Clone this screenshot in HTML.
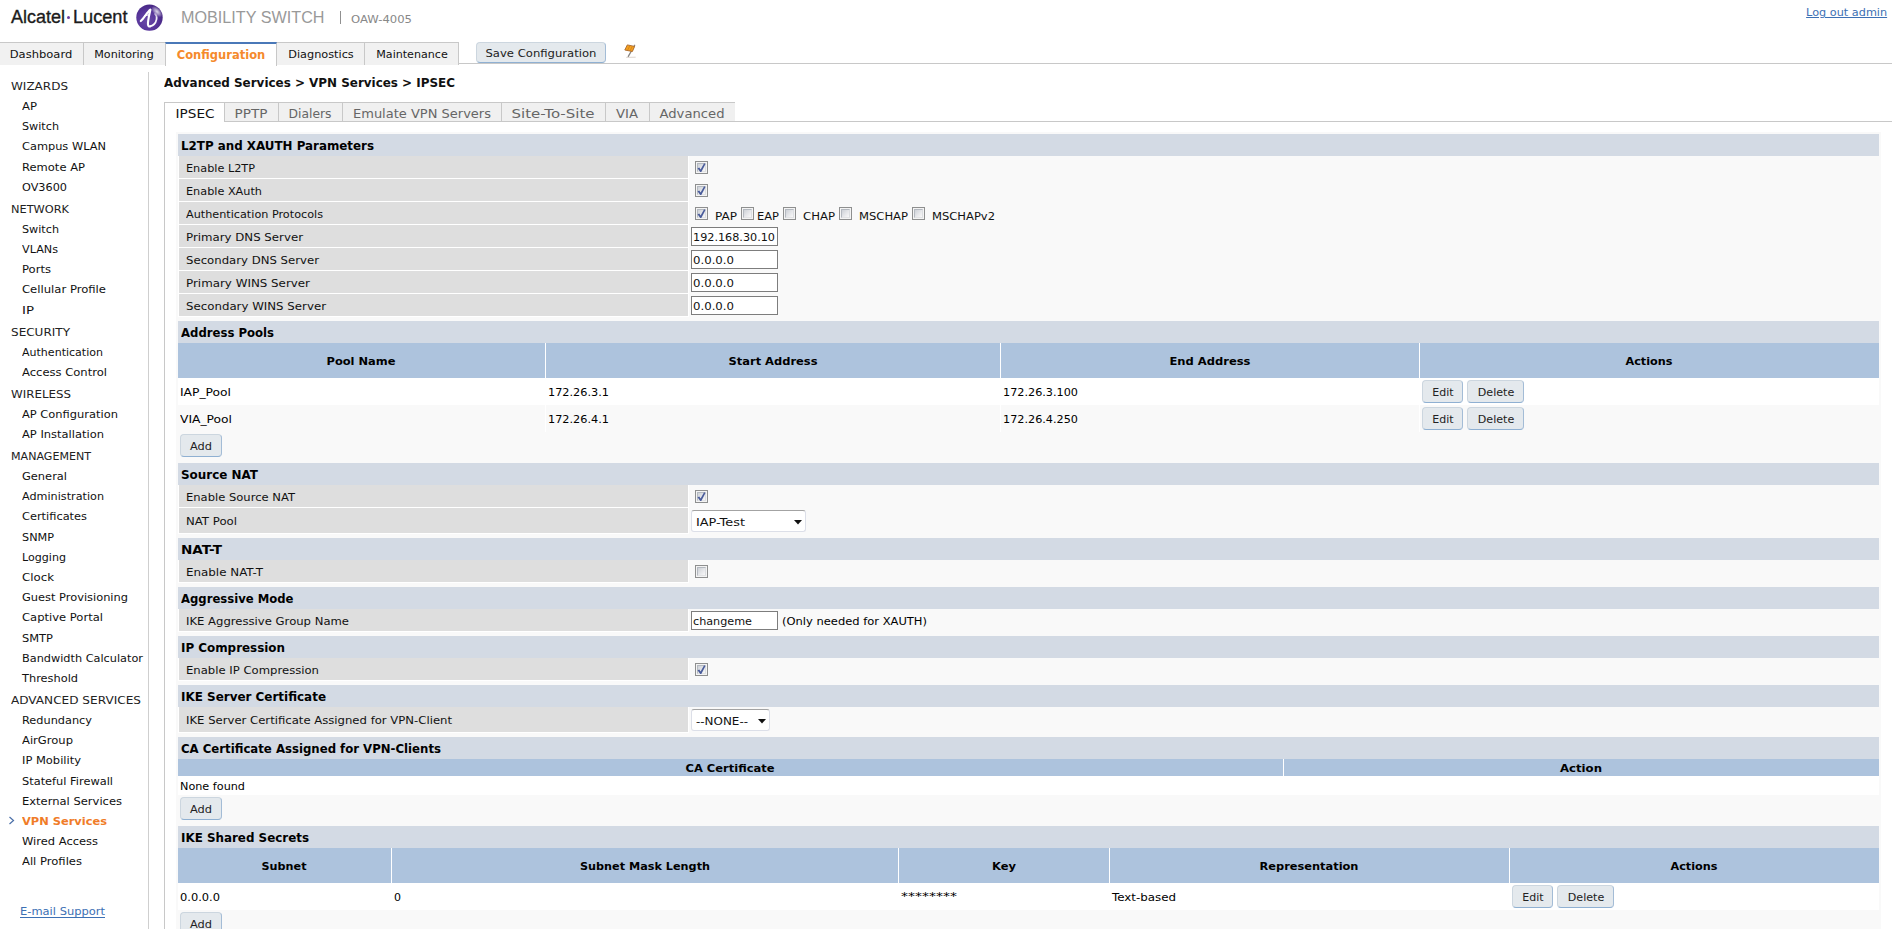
<!DOCTYPE html>
<html lang="en"><head><meta charset="utf-8"><title>Mobility Switch - IPSEC</title>
<style>
html,body{margin:0;padding:0;background:#fff;}
body{width:1892px;height:929px;position:relative;overflow:hidden;font-family:"DejaVu Sans", "Liberation Sans", sans-serif;font-size:11px;color:#000;}
body>div,body>span,body>a,body>svg{position:absolute;box-sizing:border-box;}
.t{white-space:nowrap;}

.btn{background:#e4e9ed;border:1px solid #ccd6df;border-bottom-color:#8fb0d2;border-right-color:#a3bcd6;border-radius:4px;}
.inp{background:#fff;border:1px solid #7d7d7d;}
.sel{background:#fff;border:1px solid #dcdfe8;border-top-color:#a3a3a3;border-radius:3px;}
.cb{background:#f3f3f3;border:1px solid #8e8f8f;}
</style></head>
<body>
<span id="t1" class="t" style="transform:scaleX(0.9994);top:5.0px;font-size:18px;line-height:24px;color:#1c1c1c;font-family:'Liberation Sans', sans-serif;left:10.5px;transform-origin:0 50%;-webkit-text-stroke:0.35px #1c1c1c;">Alcatel</span>
<div style="left:66.8px;top:15.6px;width:3.4px;height:3.4px;background:#6a3fa0;border-radius:50%;"></div>
<span id="t2" class="t" style="transform:scaleX(1.0084);top:5.0px;font-size:18px;line-height:24px;color:#1c1c1c;font-family:'Liberation Sans', sans-serif;left:72.5px;transform-origin:0 50%;-webkit-text-stroke:0.35px #1c1c1c;">Lucent</span>
<svg style="left:134px;top:2px" width="32" height="32" viewBox="0 0 32 32">
<defs><radialGradient id="lg" cx="40%" cy="62%" r="62%"><stop offset="0" stop-color="#6a4aa7"/><stop offset="0.6" stop-color="#58369b"/><stop offset="1" stop-color="#472784"/></radialGradient>
<radialGradient id="lh" cx="50%" cy="50%" r="50%"><stop offset="0" stop-color="#fff" stop-opacity="0.8"/><stop offset="0.5" stop-color="#fff" stop-opacity="0.45"/><stop offset="1" stop-color="#fff" stop-opacity="0"/></radialGradient>
<linearGradient id="lf" gradientUnits="userSpaceOnUse" x1="16" y1="24" x2="22" y2="11"><stop offset="0" stop-color="#fff" stop-opacity="1"/><stop offset="0.75" stop-color="#fff" stop-opacity="0.9"/><stop offset="1" stop-color="#fff" stop-opacity="0.3"/></linearGradient></defs>
<circle cx="15.5" cy="15.6" r="13.2" fill="url(#lg)"/>
<ellipse cx="23" cy="9.6" rx="7" ry="3.8" transform="rotate(45 23 9.6)" fill="url(#lh)"/>
<path d="M6.8 19.1 C10.5 15.6 13.2 10 16.4 7.7 C15.8 11 13.5 19 14 22.7 C14.2 24.3 15.2 24.7 16.4 24.3" fill="none" stroke="#fff" stroke-width="2.1" stroke-linecap="round" stroke-linejoin="round"/>
<path d="M16.4 24.3 C19.2 23.6 21.7 21 22.5 17.5 C23 15.3 22.7 13.2 21 11.9" fill="none" stroke="url(#lf)" stroke-width="1.7" stroke-linecap="round"/>
<path d="M10.8 13.5 L14.6 12.8" fill="none" stroke="#fff" stroke-width="1.2" stroke-linecap="round"/>
</svg>
<span id="t3" class="t" style="transform:scaleX(1.0110);top:7.400000000000002px;font-size:16px;line-height:22px;color:#999;font-family:'Liberation Sans', sans-serif;left:181px;transform-origin:0 50%;">MOBILITY SWITCH</span>
<div style="left:340px;top:11px;width:1px;height:13px;background:#909090;"></div>
<span id="t4" class="t" style="transform:scaleX(1.0554);top:11.8px;font-size:11px;line-height:15px;color:#888;left:351px;transform-origin:0 50%;">OAW-4005</span>
<span id="t5" class="t" style="transform:scaleX(1.0237);top:5.300000000000001px;font-size:11px;line-height:15px;color:#3c70b4;right:5px;transform-origin:100% 50%;text-decoration:underline;">Log out admin</span>
<div style="left:459px;top:63px;width:1433px;height:1px;background:#c8c8c8;"></div>
<div style="left:-1px;top:42px;width:85px;height:23px;background:#f1f1f1;border-left:1px solid #c8c8c8;border-right:1px solid #c8c8c8;border-top:1px solid #c8c8c8;"></div>
<span id="t6" class="t" style="transform:scaleX(1.0471);top:46.699999999999996px;font-size:11px;line-height:15px;color:#111;left:40.9px;margin-left:-300px;width:600px;text-align:center;transform-origin:50% 50%;">Dashboard</span>
<div style="left:83px;top:42px;width:83px;height:23px;background:#f1f1f1;border-left:1px solid #c8c8c8;border-right:1px solid #c8c8c8;border-top:1px solid #c8c8c8;"></div>
<span id="t7" class="t" style="transform:scaleX(1.0114);top:46.699999999999996px;font-size:11px;line-height:15px;color:#111;left:124.1px;margin-left:-300px;width:600px;text-align:center;transform-origin:50% 50%;">Monitoring</span>
<div style="left:276px;top:42px;width:89px;height:23px;background:#f1f1f1;border-left:1px solid #c8c8c8;border-right:1px solid #c8c8c8;border-top:1px solid #c8c8c8;"></div>
<span id="t8" class="t" style="transform:scaleX(1.0259);top:46.699999999999996px;font-size:11px;line-height:15px;color:#111;left:320.5px;margin-left:-300px;width:600px;text-align:center;transform-origin:50% 50%;">Diagnostics</span>
<div style="left:364px;top:42px;width:95px;height:23px;background:#f1f1f1;border-left:1px solid #c8c8c8;border-right:1px solid #c8c8c8;border-top:1px solid #c8c8c8;"></div>
<span id="t9" class="t" style="transform:scaleX(1.0093);top:46.699999999999996px;font-size:11px;line-height:15px;color:#111;left:411.5px;margin-left:-300px;width:600px;text-align:center;transform-origin:50% 50%;">Maintenance</span>
<div style="left:165px;top:42px;width:112px;height:24px;background:#fff;border-left:1px solid #c8c8c8;border-right:1px solid #c8c8c8;border-top:2px solid #4a78b8;"></div>
<span id="t10" class="t" style="transform:scaleX(0.9590);top:47.0px;font-size:12px;line-height:16px;color:#f58a2c;font-weight:bold;left:220.5px;margin-left:-300px;width:600px;text-align:center;transform-origin:50% 50%;">Configuration</span>
<div class="btn" style="left:476px;top:42px;width:130px;height:21px;"></div>
<span id="t11" class="t" style="transform:scaleX(1.0560);top:45.599999999999994px;font-size:11px;line-height:15px;color:#222;left:541.0px;margin-left:-300px;width:600px;text-align:center;transform-origin:50% 50%;">Save Configuration</span>
<svg style="left:622px;top:43px" width="16" height="16" viewBox="0 0 16 16">
<path d="M4.2 14.4 L13.7 14.2" stroke="#d8cfc8" stroke-width="0.9" fill="none"/>
<path d="M12.7 2.2 L6.3 13.4" stroke="#8a8682" stroke-width="1.3" fill="none" stroke-linecap="round"/>
<path d="M5.3 1.9 L12.6 3.4 L10.4 8.5 L2.8 7.0 Z" fill="#f5a11f" stroke="#a8662a" stroke-width="0.9" stroke-linejoin="round"/>
<path d="M7.8 2.8 L5.6 7.2 M10.2 3.6 L8 7.8" stroke="#c97a1a" stroke-width="0.7" fill="none"/>
</svg>
<div style="left:148px;top:72px;width:1px;height:857px;background:#cfcfcf;"></div>
<span id="t12" class="t" style="transform:scaleX(1.0903);top:78.8px;font-size:11px;line-height:15px;color:#222;left:11px;transform-origin:0 50%;">WIZARDS</span>
<span id="t13" class="t" style="transform:scaleX(1.0584);top:98.8px;font-size:11px;line-height:15px;color:#111;left:22px;transform-origin:0 50%;">AP</span>
<span id="t14" class="t" style="transform:scaleX(1.0172);top:118.8px;font-size:11px;line-height:15px;color:#111;left:22px;transform-origin:0 50%;">Switch</span>
<span id="t15" class="t" style="transform:scaleX(1.0327);top:138.8px;font-size:11px;line-height:15px;color:#111;left:22px;transform-origin:0 50%;">Campus WLAN</span>
<span id="t16" class="t" style="transform:scaleX(1.0481);top:159.8px;font-size:11px;line-height:15px;color:#111;left:22px;transform-origin:0 50%;">Remote AP</span>
<span id="t17" class="t" style="transform:scaleX(1.0231);top:179.8px;font-size:11px;line-height:15px;color:#111;left:22px;transform-origin:0 50%;">OV3600</span>
<span id="t18" class="t" style="transform:scaleX(1.0303);top:201.8px;font-size:11px;line-height:15px;color:#222;left:11px;transform-origin:0 50%;">NETWORK</span>
<span id="t19" class="t" style="transform:scaleX(1.0172);top:221.8px;font-size:11px;line-height:15px;color:#111;left:22px;transform-origin:0 50%;">Switch</span>
<span id="t20" class="t" style="transform:scaleX(1.0172);top:241.8px;font-size:11px;line-height:15px;color:#111;left:22px;transform-origin:0 50%;">VLANs</span>
<span id="t21" class="t" style="transform:scaleX(1.0528);top:261.8px;font-size:11px;line-height:15px;color:#111;left:22px;transform-origin:0 50%;">Ports</span>
<span id="t22" class="t" style="transform:scaleX(1.0558);top:281.8px;font-size:11px;line-height:15px;color:#111;left:22px;transform-origin:0 50%;">Cellular Profile</span>
<span id="t23" class="t" style="transform:scaleX(1.2133);top:302.8px;font-size:11px;line-height:15px;color:#111;left:22px;transform-origin:0 50%;">IP</span>
<span id="t24" class="t" style="transform:scaleX(1.0926);top:324.8px;font-size:11px;line-height:15px;color:#222;left:11px;transform-origin:0 50%;">SECURITY</span>
<span id="t25" class="t" style="transform:scaleX(1.0031);top:344.8px;font-size:11px;line-height:15px;color:#111;left:22px;transform-origin:0 50%;">Authentication</span>
<span id="t26" class="t" style="transform:scaleX(1.0504);top:364.8px;font-size:11px;line-height:15px;color:#111;left:22px;transform-origin:0 50%;">Access Control</span>
<span id="t27" class="t" style="transform:scaleX(1.0759);top:386.8px;font-size:11px;line-height:15px;color:#222;left:11px;transform-origin:0 50%;">WIRELESS</span>
<span id="t28" class="t" style="transform:scaleX(1.0405);top:406.8px;font-size:11px;line-height:15px;color:#111;left:22px;transform-origin:0 50%;">AP Configuration</span>
<span id="t29" class="t" style="transform:scaleX(1.0433);top:426.8px;font-size:11px;line-height:15px;color:#111;left:22px;transform-origin:0 50%;">AP Installation</span>
<span id="t30" class="t" style="transform:scaleX(1.0069);top:448.8px;font-size:11px;line-height:15px;color:#222;left:11px;transform-origin:0 50%;">MANAGEMENT</span>
<span id="t31" class="t" style="transform:scaleX(1.0378);top:468.8px;font-size:11px;line-height:15px;color:#111;left:22px;transform-origin:0 50%;">General</span>
<span id="t32" class="t" style="transform:scaleX(1.0186);top:488.8px;font-size:11px;line-height:15px;color:#111;left:22px;transform-origin:0 50%;">Administration</span>
<span id="t33" class="t" style="transform:scaleX(1.0338);top:508.79999999999995px;font-size:11px;line-height:15px;color:#111;left:22px;transform-origin:0 50%;">Certificates</span>
<span id="t34" class="t" style="transform:scaleX(1.0209);top:529.8px;font-size:11px;line-height:15px;color:#111;left:22px;transform-origin:0 50%;">SNMP</span>
<span id="t35" class="t" style="transform:scaleX(1.0082);top:549.8px;font-size:11px;line-height:15px;color:#111;left:22px;transform-origin:0 50%;">Logging</span>
<span id="t36" class="t" style="transform:scaleX(1.0706);top:569.8px;font-size:11px;line-height:15px;color:#111;left:22px;transform-origin:0 50%;">Clock</span>
<span id="t37" class="t" style="transform:scaleX(1.0359);top:589.8px;font-size:11px;line-height:15px;color:#111;left:22px;transform-origin:0 50%;">Guest Provisioning</span>
<span id="t38" class="t" style="transform:scaleX(1.0498);top:609.8px;font-size:11px;line-height:15px;color:#111;left:22px;transform-origin:0 50%;">Captive Portal</span>
<span id="t39" class="t" style="transform:scaleX(1.0393);top:630.8px;font-size:11px;line-height:15px;color:#111;left:22px;transform-origin:0 50%;">SMTP</span>
<span id="t40" class="t" style="transform:scaleX(1.0261);top:650.8px;font-size:11px;line-height:15px;color:#111;left:22px;transform-origin:0 50%;">Bandwidth Calculator</span>
<span id="t41" class="t" style="transform:scaleX(1.0329);top:670.8px;font-size:11px;line-height:15px;color:#111;left:22px;transform-origin:0 50%;">Threshold</span>
<span id="t42" class="t" style="transform:scaleX(1.0985);top:692.8px;font-size:11px;line-height:15px;color:#222;left:11px;transform-origin:0 50%;">ADVANCED SERVICES</span>
<span id="t43" class="t" style="transform:scaleX(1.0278);top:712.8px;font-size:11px;line-height:15px;color:#111;left:22px;transform-origin:0 50%;">Redundancy</span>
<span id="t44" class="t" style="transform:scaleX(1.0495);top:732.8px;font-size:11px;line-height:15px;color:#111;left:22px;transform-origin:0 50%;">AirGroup</span>
<span id="t45" class="t" style="transform:scaleX(1.0428);top:752.8px;font-size:11px;line-height:15px;color:#111;left:22px;transform-origin:0 50%;">IP Mobility</span>
<span id="t46" class="t" style="transform:scaleX(1.0341);top:773.8px;font-size:11px;line-height:15px;color:#111;left:22px;transform-origin:0 50%;">Stateful Firewall</span>
<span id="t47" class="t" style="transform:scaleX(1.0468);top:793.8px;font-size:11px;line-height:15px;color:#111;left:22px;transform-origin:0 50%;">External Services</span>
<span id="t48" class="t" style="transform:scaleX(1.0380);top:813.8px;font-size:11px;line-height:15px;color:#f07c28;font-weight:bold;left:22px;transform-origin:0 50%;">VPN Services</span>
<svg style="left:8px;top:816px" width="8" height="9" viewBox="0 0 8 9"><path d="M1.5 1 L5.5 4.5 L1.5 8" fill="none" stroke="#4a6fa8" stroke-width="1.2"/></svg>
<span id="t49" class="t" style="transform:scaleX(1.0429);top:833.8px;font-size:11px;line-height:15px;color:#111;left:22px;transform-origin:0 50%;">Wired Access</span>
<span id="t50" class="t" style="transform:scaleX(1.0512);top:853.8px;font-size:11px;line-height:15px;color:#111;left:22px;transform-origin:0 50%;">All Profiles</span>
<span id="t51" class="t" style="transform:scaleX(1.0433);top:903.8px;font-size:11px;line-height:15px;color:#3c70b4;left:20px;transform-origin:0 50%;text-decoration:underline;text-underline-offset:2px;">E-mail Support</span>
<span id="t52" class="t" style="transform:scaleX(0.9950);top:74.8px;font-size:12px;line-height:16px;color:#111;font-weight:bold;left:164px;transform-origin:0 50%;">Advanced Services &gt; VPN Services &gt; IPSEC</span>
<div style="left:164px;top:121px;width:1728px;height:1px;background:#c8c8c8;"></div>
<div style="left:164px;top:102px;width:1px;height:827px;background:#c8c8c8;"></div>
<div style="left:224px;top:102px;width:55px;height:20px;background:#f0f0f0;border:1px solid #c8c8c8;"></div>
<span id="t53" class="t" style="transform:scaleX(1.0487);top:104.5px;font-size:13px;line-height:17px;color:#666;left:251.0px;margin-left:-300px;width:600px;text-align:center;transform-origin:50% 50%;">PPTP</span>
<div style="left:278px;top:102px;width:65px;height:20px;background:#f0f0f0;border:1px solid #c8c8c8;"></div>
<span id="t54" class="t" style="transform:scaleX(0.9486);top:104.5px;font-size:13px;line-height:17px;color:#666;left:310.0px;margin-left:-300px;width:600px;text-align:center;transform-origin:50% 50%;">Dialers</span>
<div style="left:342px;top:102px;width:160px;height:20px;background:#f0f0f0;border:1px solid #c8c8c8;"></div>
<span id="t55" class="t" style="transform:scaleX(1.0006);top:104.5px;font-size:13px;line-height:17px;color:#666;left:421.5px;margin-left:-300px;width:600px;text-align:center;transform-origin:50% 50%;">Emulate VPN Servers</span>
<div style="left:501px;top:102px;width:105px;height:20px;background:#f0f0f0;border:1px solid #c8c8c8;"></div>
<span id="t56" class="t" style="transform:scaleX(1.1520);top:104.5px;font-size:13px;line-height:17px;color:#666;left:553.0px;margin-left:-300px;width:600px;text-align:center;transform-origin:50% 50%;">Site-To-Site</span>
<div style="left:605px;top:102px;width:45px;height:20px;background:#f0f0f0;border:1px solid #c8c8c8;"></div>
<span id="t57" class="t" style="transform:scaleX(1.0173);top:104.5px;font-size:13px;line-height:17px;color:#666;left:627.0px;margin-left:-300px;width:600px;text-align:center;transform-origin:50% 50%;">VIA</span>
<div style="left:649px;top:102px;width:86px;height:20px;background:#f0f0f0;border:1px solid #c8c8c8;border-right:none;"></div>
<span id="t58" class="t" style="transform:scaleX(1.0122);top:104.5px;font-size:13px;line-height:17px;color:#666;left:691.5px;margin-left:-300px;width:600px;text-align:center;transform-origin:50% 50%;">Advanced</span>
<div style="left:164px;top:102px;width:61px;height:20px;background:#fff;border:1px solid #c8c8c8;border-bottom:none;"></div>
<div style="left:165px;top:121px;width:59px;height:1px;background:#fff;"></div>
<span id="t59" class="t" style="transform:scaleX(1.0479);top:104.5px;font-size:13px;line-height:17px;color:#111;left:194.5px;margin-left:-300px;width:600px;text-align:center;transform-origin:50% 50%;">IPSEC</span>
<div style="left:176px;top:132px;width:1705px;height:797px;background:#f9f9f9;"></div>
<div style="left:178px;top:134px;width:1701px;height:22px;background:#d3dae4;"></div>
<span id="t60" class="t" style="transform:scaleX(0.9895);top:137.8px;font-size:12px;line-height:16px;color:#000;font-weight:bold;left:181px;transform-origin:0 50%;">L2TP and XAUTH Parameters</span>
<div style="left:178px;top:156px;width:511px;height:23px;background:#fff;"></div>
<div style="left:179px;top:156px;width:509px;height:22px;background:#dedede;"></div>
<span id="t61" class="t" style="transform:scaleX(1.0229);top:161.0px;font-size:11px;line-height:15px;color:#111;left:186px;transform-origin:0 50%;">Enable L2TP</span>
<div style="left:695px;top:161px;width:13px;height:13px;background:#f4f4f4;border:1px solid #8e8f8f;"></div>
<div style="left:697px;top:163px;width:9px;height:9px;background:linear-gradient(135deg,#cdd1d7 0%,#e6e7ea 55%,#f8f8f8 100%);border:1px solid #b4b9c0;border-right-color:#dcdee1;border-bottom-color:#e2e3e5;"></div>
<svg style="left:695px;top:161px" width="13" height="13" viewBox="0 0 13 13"><path d="M2.5 7.3 L4.3 6.5 L5.6 8.5 L9.1 2.3 L10.5 2.9 L6.3 10.9 L5.2 10.9 Z" fill="#4a5c9b"/></svg>
<div style="left:178px;top:179px;width:511px;height:23px;background:#fff;"></div>
<div style="left:179px;top:179px;width:509px;height:22px;background:#dedede;"></div>
<span id="t62" class="t" style="transform:scaleX(1.0229);top:184.0px;font-size:11px;line-height:15px;color:#111;left:186px;transform-origin:0 50%;">Enable XAuth</span>
<div style="left:695px;top:184px;width:13px;height:13px;background:#f4f4f4;border:1px solid #8e8f8f;"></div>
<div style="left:697px;top:186px;width:9px;height:9px;background:linear-gradient(135deg,#cdd1d7 0%,#e6e7ea 55%,#f8f8f8 100%);border:1px solid #b4b9c0;border-right-color:#dcdee1;border-bottom-color:#e2e3e5;"></div>
<svg style="left:695px;top:184px" width="13" height="13" viewBox="0 0 13 13"><path d="M2.5 7.3 L4.3 6.5 L5.6 8.5 L9.1 2.3 L10.5 2.9 L6.3 10.9 L5.2 10.9 Z" fill="#4a5c9b"/></svg>
<div style="left:178px;top:202px;width:511px;height:23px;background:#fff;"></div>
<div style="left:179px;top:202px;width:509px;height:22px;background:#dedede;"></div>
<span id="t63" class="t" style="transform:scaleX(1.0200);top:207.0px;font-size:11px;line-height:15px;color:#111;left:186px;transform-origin:0 50%;">Authentication Protocols</span>
<div style="left:695px;top:207px;width:13px;height:13px;background:#f4f4f4;border:1px solid #8e8f8f;"></div>
<div style="left:697px;top:209px;width:9px;height:9px;background:linear-gradient(135deg,#cdd1d7 0%,#e6e7ea 55%,#f8f8f8 100%);border:1px solid #b4b9c0;border-right-color:#dcdee1;border-bottom-color:#e2e3e5;"></div>
<svg style="left:695px;top:207px" width="13" height="13" viewBox="0 0 13 13"><path d="M2.5 7.3 L4.3 6.5 L5.6 8.5 L9.1 2.3 L10.5 2.9 L6.3 10.9 L5.2 10.9 Z" fill="#4a5c9b"/></svg>
<span id="t64" class="t" style="transform:scaleX(1.0949);top:209.3px;font-size:11px;line-height:15px;color:#111;left:715px;transform-origin:0 50%;">PAP</span>
<div style="left:741px;top:207px;width:13px;height:13px;background:#f4f4f4;border:1px solid #8e8f8f;"></div>
<div style="left:743px;top:209px;width:9px;height:9px;background:linear-gradient(135deg,#cdd1d7 0%,#e6e7ea 55%,#f8f8f8 100%);border:1px solid #b4b9c0;border-right-color:#dcdee1;border-bottom-color:#e2e3e5;"></div>
<span id="t65" class="t" style="transform:scaleX(1.0422);top:209.3px;font-size:11px;line-height:15px;color:#111;left:757px;transform-origin:0 50%;">EAP</span>
<div style="left:783px;top:207px;width:13px;height:13px;background:#f4f4f4;border:1px solid #8e8f8f;"></div>
<div style="left:785px;top:209px;width:9px;height:9px;background:linear-gradient(135deg,#cdd1d7 0%,#e6e7ea 55%,#f8f8f8 100%);border:1px solid #b4b9c0;border-right-color:#dcdee1;border-bottom-color:#e2e3e5;"></div>
<span id="t66" class="t" style="transform:scaleX(1.0622);top:209.3px;font-size:11px;line-height:15px;color:#111;left:803px;transform-origin:0 50%;">CHAP</span>
<div style="left:839px;top:207px;width:13px;height:13px;background:#f4f4f4;border:1px solid #8e8f8f;"></div>
<div style="left:841px;top:209px;width:9px;height:9px;background:linear-gradient(135deg,#cdd1d7 0%,#e6e7ea 55%,#f8f8f8 100%);border:1px solid #b4b9c0;border-right-color:#dcdee1;border-bottom-color:#e2e3e5;"></div>
<span id="t67" class="t" style="transform:scaleX(1.0516);top:209.3px;font-size:11px;line-height:15px;color:#111;left:859px;transform-origin:0 50%;">MSCHAP</span>
<div style="left:912px;top:207px;width:13px;height:13px;background:#f4f4f4;border:1px solid #8e8f8f;"></div>
<div style="left:914px;top:209px;width:9px;height:9px;background:linear-gradient(135deg,#cdd1d7 0%,#e6e7ea 55%,#f8f8f8 100%);border:1px solid #b4b9c0;border-right-color:#dcdee1;border-bottom-color:#e2e3e5;"></div>
<span id="t68" class="t" style="transform:scaleX(1.0484);top:209.3px;font-size:11px;line-height:15px;color:#111;left:932px;transform-origin:0 50%;">MSCHAPv2</span>
<div style="left:178px;top:225px;width:511px;height:23px;background:#fff;"></div>
<div style="left:179px;top:225px;width:509px;height:22px;background:#dedede;"></div>
<span id="t69" class="t" style="transform:scaleX(1.0708);top:230.0px;font-size:11px;line-height:15px;color:#111;left:186px;transform-origin:0 50%;">Primary DNS Server</span>
<div class="inp" style="left:691px;top:227px;width:87px;height:19px;"></div>
<span id="t70" class="t" style="transform:scaleX(1.0188);top:230.20000000000002px;font-size:11px;line-height:15px;color:#111;left:693px;transform-origin:0 50%;">192.168.30.10</span>
<div style="left:178px;top:248px;width:511px;height:23px;background:#fff;"></div>
<div style="left:179px;top:248px;width:509px;height:22px;background:#dedede;"></div>
<span id="t71" class="t" style="transform:scaleX(1.0639);top:253.0px;font-size:11px;line-height:15px;color:#111;left:186px;transform-origin:0 50%;">Secondary DNS Server</span>
<div class="inp" style="left:691px;top:250px;width:87px;height:19px;"></div>
<span id="t72" class="t" style="transform:scaleX(1.0654);top:253.2px;font-size:11px;line-height:15px;color:#111;left:693px;transform-origin:0 50%;">0.0.0.0</span>
<div style="left:178px;top:271px;width:511px;height:23px;background:#fff;"></div>
<div style="left:179px;top:271px;width:509px;height:22px;background:#dedede;"></div>
<span id="t73" class="t" style="transform:scaleX(1.0791);top:276.0px;font-size:11px;line-height:15px;color:#111;left:186px;transform-origin:0 50%;">Primary WINS Server</span>
<div class="inp" style="left:691px;top:273px;width:87px;height:19px;"></div>
<span id="t74" class="t" style="transform:scaleX(1.0654);top:276.2px;font-size:11px;line-height:15px;color:#111;left:693px;transform-origin:0 50%;">0.0.0.0</span>
<div style="left:178px;top:294px;width:511px;height:23px;background:#fff;"></div>
<div style="left:179px;top:294px;width:509px;height:22px;background:#dedede;"></div>
<span id="t75" class="t" style="transform:scaleX(1.0715);top:299.0px;font-size:11px;line-height:15px;color:#111;left:186px;transform-origin:0 50%;">Secondary WINS Server</span>
<div class="inp" style="left:691px;top:296px;width:87px;height:19px;"></div>
<span id="t76" class="t" style="transform:scaleX(1.0654);top:299.2px;font-size:11px;line-height:15px;color:#111;left:693px;transform-origin:0 50%;">0.0.0.0</span>
<div style="left:178px;top:321px;width:1701px;height:22px;background:#d3dae4;"></div>
<span id="t77" class="t" style="transform:scaleX(0.9735);top:324.8px;font-size:12px;line-height:16px;color:#000;font-weight:bold;left:181px;transform-origin:0 50%;">Address Pools</span>
<div style="left:178px;top:343px;width:1701px;height:35px;background:#fff;"></div>
<div style="left:178px;top:343px;width:367px;height:35px;background:#adc3dd;"></div>
<span id="t78" class="t" style="transform:scaleX(1.0403);top:353.8px;font-size:11px;line-height:15px;color:#000;font-weight:bold;left:361.2px;margin-left:-300px;width:600px;text-align:center;transform-origin:50% 50%;">Pool Name</span>
<div style="left:546px;top:343px;width:454px;height:35px;background:#adc3dd;"></div>
<span id="t79" class="t" style="transform:scaleX(1.0427);top:353.8px;font-size:11px;line-height:15px;color:#000;font-weight:bold;left:772.7px;margin-left:-300px;width:600px;text-align:center;transform-origin:50% 50%;">Start Address</span>
<div style="left:1001px;top:343px;width:418px;height:35px;background:#adc3dd;"></div>
<span id="t80" class="t" style="transform:scaleX(1.0479);top:353.8px;font-size:11px;line-height:15px;color:#000;font-weight:bold;left:1209.7px;margin-left:-300px;width:600px;text-align:center;transform-origin:50% 50%;">End Address</span>
<div style="left:1420px;top:343px;width:459px;height:35px;background:#adc3dd;"></div>
<span id="t81" class="t" style="transform:scaleX(1.0217);top:353.8px;font-size:11px;line-height:15px;color:#000;font-weight:bold;left:1649.2px;margin-left:-300px;width:600px;text-align:center;transform-origin:50% 50%;">Actions</span>
<div style="left:178px;top:378px;width:1701px;height:27px;background:#fff;"></div>
<span id="t82" class="t" style="transform:scaleX(1.1167);top:384.8px;font-size:11px;line-height:15px;color:#000;left:180px;transform-origin:0 50%;">IAP_Pool</span>
<span id="t83" class="t" style="transform:scaleX(1.0255);top:384.8px;font-size:11px;line-height:15px;color:#000;left:548px;transform-origin:0 50%;">172.26.3.1</span>
<span id="t84" class="t" style="transform:scaleX(1.0206);top:384.8px;font-size:11px;line-height:15px;color:#000;left:1003px;transform-origin:0 50%;">172.26.3.100</span>
<div class="btn" style="left:1422px;top:380px;width:41px;height:23px;"></div>
<span id="t85" class="t" style="transform:scaleX(0.9994);top:384.6px;font-size:11px;line-height:15px;color:#222;left:1442.5px;margin-left:-300px;width:600px;text-align:center;transform-origin:50% 50%;">Edit</span>
<div class="btn" style="left:1467px;top:380px;width:57px;height:23px;"></div>
<span id="t86" class="t" style="transform:scaleX(1.0095);top:384.6px;font-size:11px;line-height:15px;color:#222;left:1495.5px;margin-left:-300px;width:600px;text-align:center;transform-origin:50% 50%;">Delete</span>
<div style="left:545px;top:405px;width:1px;height:27px;background:#fff;"></div>
<div style="left:1000px;top:405px;width:1px;height:27px;background:#fff;"></div>
<div style="left:1419px;top:405px;width:1px;height:27px;background:#fff;"></div>
<span id="t87" class="t" style="transform:scaleX(1.1168);top:411.8px;font-size:11px;line-height:15px;color:#000;left:180px;transform-origin:0 50%;">VIA_Pool</span>
<span id="t88" class="t" style="transform:scaleX(1.0255);top:411.8px;font-size:11px;line-height:15px;color:#000;left:548px;transform-origin:0 50%;">172.26.4.1</span>
<span id="t89" class="t" style="transform:scaleX(1.0206);top:411.8px;font-size:11px;line-height:15px;color:#000;left:1003px;transform-origin:0 50%;">172.26.4.250</span>
<div class="btn" style="left:1422px;top:407px;width:41px;height:23px;"></div>
<span id="t90" class="t" style="transform:scaleX(0.9994);top:411.6px;font-size:11px;line-height:15px;color:#222;left:1442.5px;margin-left:-300px;width:600px;text-align:center;transform-origin:50% 50%;">Edit</span>
<div class="btn" style="left:1467px;top:407px;width:57px;height:23px;"></div>
<span id="t91" class="t" style="transform:scaleX(1.0095);top:411.6px;font-size:11px;line-height:15px;color:#222;left:1495.5px;margin-left:-300px;width:600px;text-align:center;transform-origin:50% 50%;">Delete</span>
<div class="btn" style="left:180px;top:434px;width:42px;height:23px;"></div>
<span id="t92" class="t" style="transform:scaleX(1.0330);top:438.6px;font-size:11px;line-height:15px;color:#222;left:201.0px;margin-left:-300px;width:600px;text-align:center;transform-origin:50% 50%;">Add</span>
<div style="left:178px;top:463px;width:1701px;height:22px;background:#d3dae4;"></div>
<span id="t93" class="t" style="transform:scaleX(0.9952);top:466.8px;font-size:12px;line-height:16px;color:#000;font-weight:bold;left:181px;transform-origin:0 50%;">Source NAT</span>
<div style="left:178px;top:485px;width:511px;height:23px;background:#fff;"></div>
<div style="left:179px;top:485px;width:509px;height:22px;background:#dedede;"></div>
<span id="t94" class="t" style="transform:scaleX(1.0493);top:490.0px;font-size:11px;line-height:15px;color:#111;left:186px;transform-origin:0 50%;">Enable Source NAT</span>
<div style="left:695px;top:490px;width:13px;height:13px;background:#f4f4f4;border:1px solid #8e8f8f;"></div>
<div style="left:697px;top:492px;width:9px;height:9px;background:linear-gradient(135deg,#cdd1d7 0%,#e6e7ea 55%,#f8f8f8 100%);border:1px solid #b4b9c0;border-right-color:#dcdee1;border-bottom-color:#e2e3e5;"></div>
<svg style="left:695px;top:490px" width="13" height="13" viewBox="0 0 13 13"><path d="M2.5 7.3 L4.3 6.5 L5.6 8.5 L9.1 2.3 L10.5 2.9 L6.3 10.9 L5.2 10.9 Z" fill="#4a5c9b"/></svg>
<div style="left:178px;top:508px;width:511px;height:26px;background:#fff;"></div>
<div style="left:179px;top:508px;width:509px;height:25px;background:#dedede;"></div>
<span id="t95" class="t" style="transform:scaleX(1.0653);top:513.5px;font-size:11px;line-height:15px;color:#111;left:186px;transform-origin:0 50%;">NAT Pool</span>
<div class="sel" style="left:691px;top:510px;width:115px;height:22px;"></div>
<span id="t96" class="t" style="transform:scaleX(1.1723);top:514.9px;font-size:11px;line-height:15px;color:#111;left:696px;transform-origin:0 50%;">IAP-Test</span>
<svg style="left:793.5px;top:519.8px" width="8" height="5" viewBox="0 0 8 5"><path d="M0 0 L8 0 L4 4.6 Z" fill="#111"/></svg>
<div style="left:178px;top:538px;width:1701px;height:22px;background:#d3dae4;"></div>
<span id="t97" class="t" style="transform:scaleX(1.1315);top:541.8px;font-size:12px;line-height:16px;color:#000;font-weight:bold;left:181px;transform-origin:0 50%;">NAT-T</span>
<div style="left:178px;top:560px;width:511px;height:23px;background:#fff;"></div>
<div style="left:179px;top:560px;width:509px;height:22px;background:#dedede;"></div>
<span id="t98" class="t" style="transform:scaleX(1.0805);top:565.0px;font-size:11px;line-height:15px;color:#111;left:186px;transform-origin:0 50%;">Enable NAT-T</span>
<div style="left:695px;top:565px;width:13px;height:13px;background:#f4f4f4;border:1px solid #8e8f8f;"></div>
<div style="left:697px;top:567px;width:9px;height:9px;background:linear-gradient(135deg,#cdd1d7 0%,#e6e7ea 55%,#f8f8f8 100%);border:1px solid #b4b9c0;border-right-color:#dcdee1;border-bottom-color:#e2e3e5;"></div>
<div style="left:178px;top:587px;width:1701px;height:22px;background:#d3dae4;"></div>
<span id="t99" class="t" style="transform:scaleX(0.9700);top:590.8px;font-size:12px;line-height:16px;color:#000;font-weight:bold;left:181px;transform-origin:0 50%;">Aggressive Mode</span>
<div style="left:178px;top:609px;width:511px;height:23px;background:#fff;"></div>
<div style="left:179px;top:609px;width:509px;height:22px;background:#dedede;"></div>
<span id="t100" class="t" style="transform:scaleX(1.0573);top:614.0px;font-size:11px;line-height:15px;color:#111;left:186px;transform-origin:0 50%;">IKE Aggressive Group Name</span>
<div class="inp" style="left:691px;top:611px;width:87px;height:19px;"></div>
<span id="t101" class="t" style="transform:scaleX(1.0178);top:614.1999999999999px;font-size:11px;line-height:15px;color:#111;left:693px;transform-origin:0 50%;">changeme</span>
<span id="t102" class="t" style="transform:scaleX(1.0450);top:613.8px;font-size:11px;line-height:15px;color:#000;left:782px;transform-origin:0 50%;">(Only needed for XAUTH)</span>
<div style="left:178px;top:636px;width:1701px;height:22px;background:#d3dae4;"></div>
<span id="t103" class="t" style="transform:scaleX(0.9921);top:639.8px;font-size:12px;line-height:16px;color:#000;font-weight:bold;left:181px;transform-origin:0 50%;">IP Compression</span>
<div style="left:178px;top:658px;width:511px;height:23px;background:#fff;"></div>
<div style="left:179px;top:658px;width:509px;height:22px;background:#dedede;"></div>
<span id="t104" class="t" style="transform:scaleX(1.0579);top:663.0px;font-size:11px;line-height:15px;color:#111;left:186px;transform-origin:0 50%;">Enable IP Compression</span>
<div style="left:695px;top:663px;width:13px;height:13px;background:#f4f4f4;border:1px solid #8e8f8f;"></div>
<div style="left:697px;top:665px;width:9px;height:9px;background:linear-gradient(135deg,#cdd1d7 0%,#e6e7ea 55%,#f8f8f8 100%);border:1px solid #b4b9c0;border-right-color:#dcdee1;border-bottom-color:#e2e3e5;"></div>
<svg style="left:695px;top:663px" width="13" height="13" viewBox="0 0 13 13"><path d="M2.5 7.3 L4.3 6.5 L5.6 8.5 L9.1 2.3 L10.5 2.9 L6.3 10.9 L5.2 10.9 Z" fill="#4a5c9b"/></svg>
<div style="left:178px;top:685px;width:1701px;height:22px;background:#d3dae4;"></div>
<span id="t105" class="t" style="transform:scaleX(0.9959);top:688.8px;font-size:12px;line-height:16px;color:#000;font-weight:bold;left:181px;transform-origin:0 50%;">IKE Server Certificate</span>
<div style="left:178px;top:707px;width:511px;height:26px;background:#fff;"></div>
<div style="left:179px;top:707px;width:509px;height:25px;background:#dedede;"></div>
<span id="t106" class="t" style="transform:scaleX(1.0590);top:712.5px;font-size:11px;line-height:15px;color:#111;left:186px;transform-origin:0 50%;">IKE Server Certificate Assigned for VPN-Client</span>
<div class="sel" style="left:691px;top:709px;width:79px;height:22px;"></div>
<span id="t107" class="t" style="transform:scaleX(1.0844);top:713.9px;font-size:11px;line-height:15px;color:#111;left:696px;transform-origin:0 50%;">--NONE--</span>
<svg style="left:757.5px;top:718.8px" width="8" height="5" viewBox="0 0 8 5"><path d="M0 0 L8 0 L4 4.6 Z" fill="#111"/></svg>
<div style="left:178px;top:737px;width:1701px;height:22px;background:#d3dae4;"></div>
<span id="t108" class="t" style="transform:scaleX(0.9769);top:740.8px;font-size:12px;line-height:16px;color:#000;font-weight:bold;left:181px;transform-origin:0 50%;">CA Certificate Assigned for VPN-Clients</span>
<div style="left:178px;top:759px;width:1701px;height:17px;background:#fff;"></div>
<div style="left:178px;top:759px;width:1105px;height:17px;background:#adc3dd;"></div>
<span id="t109" class="t" style="transform:scaleX(1.0444);top:760.8px;font-size:11px;line-height:15px;color:#000;font-weight:bold;left:730.2px;margin-left:-300px;width:600px;text-align:center;transform-origin:50% 50%;">CA Certificate</span>
<div style="left:1284px;top:759px;width:595px;height:17px;background:#adc3dd;"></div>
<span id="t110" class="t" style="transform:scaleX(1.0646);top:760.8px;font-size:11px;line-height:15px;color:#000;font-weight:bold;left:1581.2px;margin-left:-300px;width:600px;text-align:center;transform-origin:50% 50%;">Action</span>
<div style="left:178px;top:776px;width:1701px;height:19px;background:#fff;"></div>
<span id="t111" class="t" style="transform:scaleX(1.0199);top:778.8px;font-size:11px;line-height:15px;color:#000;left:180px;transform-origin:0 50%;">None found</span>
<div class="btn" style="left:180px;top:797px;width:42px;height:23px;"></div>
<span id="t112" class="t" style="transform:scaleX(1.0330);top:801.5999999999999px;font-size:11px;line-height:15px;color:#222;left:201.0px;margin-left:-300px;width:600px;text-align:center;transform-origin:50% 50%;">Add</span>
<div style="left:178px;top:826px;width:1701px;height:22px;background:#d3dae4;"></div>
<span id="t113" class="t" style="transform:scaleX(0.9916);top:829.8px;font-size:12px;line-height:16px;color:#000;font-weight:bold;left:181px;transform-origin:0 50%;">IKE Shared Secrets</span>
<div style="left:178px;top:848px;width:1701px;height:35px;background:#fff;"></div>
<div style="left:178px;top:848px;width:213px;height:35px;background:#adc3dd;"></div>
<span id="t114" class="t" style="transform:scaleX(1.0184);top:858.8px;font-size:11px;line-height:15px;color:#000;font-weight:bold;left:284.2px;margin-left:-300px;width:600px;text-align:center;transform-origin:50% 50%;">Subnet</span>
<div style="left:392px;top:848px;width:506px;height:35px;background:#adc3dd;"></div>
<span id="t115" class="t" style="transform:scaleX(1.0209);top:858.8px;font-size:11px;line-height:15px;color:#000;font-weight:bold;left:644.7px;margin-left:-300px;width:600px;text-align:center;transform-origin:50% 50%;">Subnet Mask Length</span>
<div style="left:899px;top:848px;width:210px;height:35px;background:#adc3dd;"></div>
<span id="t116" class="t" style="transform:scaleX(1.0449);top:858.8px;font-size:11px;line-height:15px;color:#000;font-weight:bold;left:1003.7px;margin-left:-300px;width:600px;text-align:center;transform-origin:50% 50%;">Key</span>
<div style="left:1110px;top:848px;width:399px;height:35px;background:#adc3dd;"></div>
<span id="t117" class="t" style="transform:scaleX(1.0351);top:858.8px;font-size:11px;line-height:15px;color:#000;font-weight:bold;left:1309.2px;margin-left:-300px;width:600px;text-align:center;transform-origin:50% 50%;">Representation</span>
<div style="left:1510px;top:848px;width:369px;height:35px;background:#adc3dd;"></div>
<span id="t118" class="t" style="transform:scaleX(1.0217);top:858.8px;font-size:11px;line-height:15px;color:#000;font-weight:bold;left:1694.2px;margin-left:-300px;width:600px;text-align:center;transform-origin:50% 50%;">Actions</span>
<div style="left:178px;top:883px;width:1701px;height:27px;background:#fff;"></div>
<span id="t119" class="t" style="transform:scaleX(1.0394);top:889.8px;font-size:11px;line-height:15px;color:#000;left:180px;transform-origin:0 50%;">0.0.0.0</span>
<span id="t120" class="t" style="transform:scaleX(1.0000);top:889.8px;font-size:11px;line-height:15px;color:#000;left:394px;transform-origin:0 50%;">0</span>
<span id="t121" class="t" style="transform:scaleX(1.2727);top:889.3px;font-size:11px;line-height:15px;color:#000;left:901px;transform-origin:0 50%;">********</span>
<span id="t122" class="t" style="transform:scaleX(1.0770);top:889.8px;font-size:11px;line-height:15px;color:#000;left:1112px;transform-origin:0 50%;">Text-based</span>
<div class="btn" style="left:1512px;top:885px;width:41px;height:23px;"></div>
<span id="t123" class="t" style="transform:scaleX(0.9994);top:889.5999999999999px;font-size:11px;line-height:15px;color:#222;left:1532.5px;margin-left:-300px;width:600px;text-align:center;transform-origin:50% 50%;">Edit</span>
<div class="btn" style="left:1557px;top:885px;width:57px;height:23px;"></div>
<span id="t124" class="t" style="transform:scaleX(1.0095);top:889.5999999999999px;font-size:11px;line-height:15px;color:#222;left:1585.5px;margin-left:-300px;width:600px;text-align:center;transform-origin:50% 50%;">Delete</span>
<div class="btn" style="left:180px;top:912px;width:42px;height:23px;"></div>
<span id="t125" class="t" style="transform:scaleX(1.0330);top:916.5999999999999px;font-size:11px;line-height:15px;color:#222;left:201.0px;margin-left:-300px;width:600px;text-align:center;transform-origin:50% 50%;">Add</span>
</body></html>
